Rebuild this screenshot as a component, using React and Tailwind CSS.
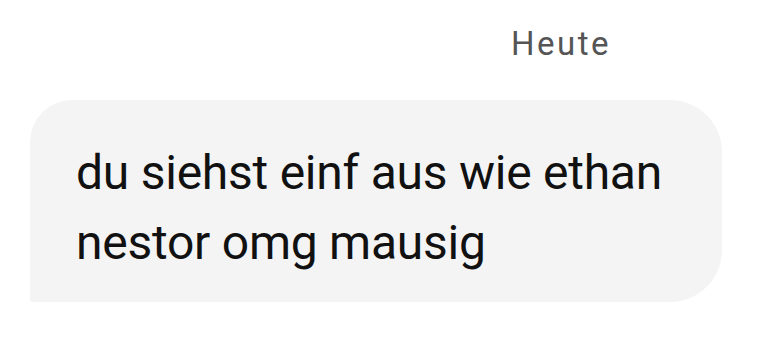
export default function App() {
    return (
        <div className="w-[780px] h-[359px] bg-white overflow-hidden" style={{ fontFamily: "Roboto, 'Noto Sans', sans-serif" }}>
            {/* date label */}
            <div className="flex justify-end pr-[169px] pt-[24px]">
                <span className="text-[33px] leading-[40px] tracking-[2.5px] text-[#555555]">Heute</span>
            </div>

            {/* message bubble */}
            <div className="pl-[30px] pt-[36px]">
                <div className="w-[692px] h-[202px] bg-[#f4f4f4] rounded-tl-[42px] rounded-tr-[52px] rounded-br-[52px] rounded-bl-[3px] pl-[46px] pt-[38px]">
                    <p className="text-[48px] leading-[70px] text-[#111111] tracking-[-0.25px]">
                        du siehst einf aus wie ethan
                        <br />
                        nestor omg mausig
                    </p>
                </div>
            </div>
        </div>
    );
}
